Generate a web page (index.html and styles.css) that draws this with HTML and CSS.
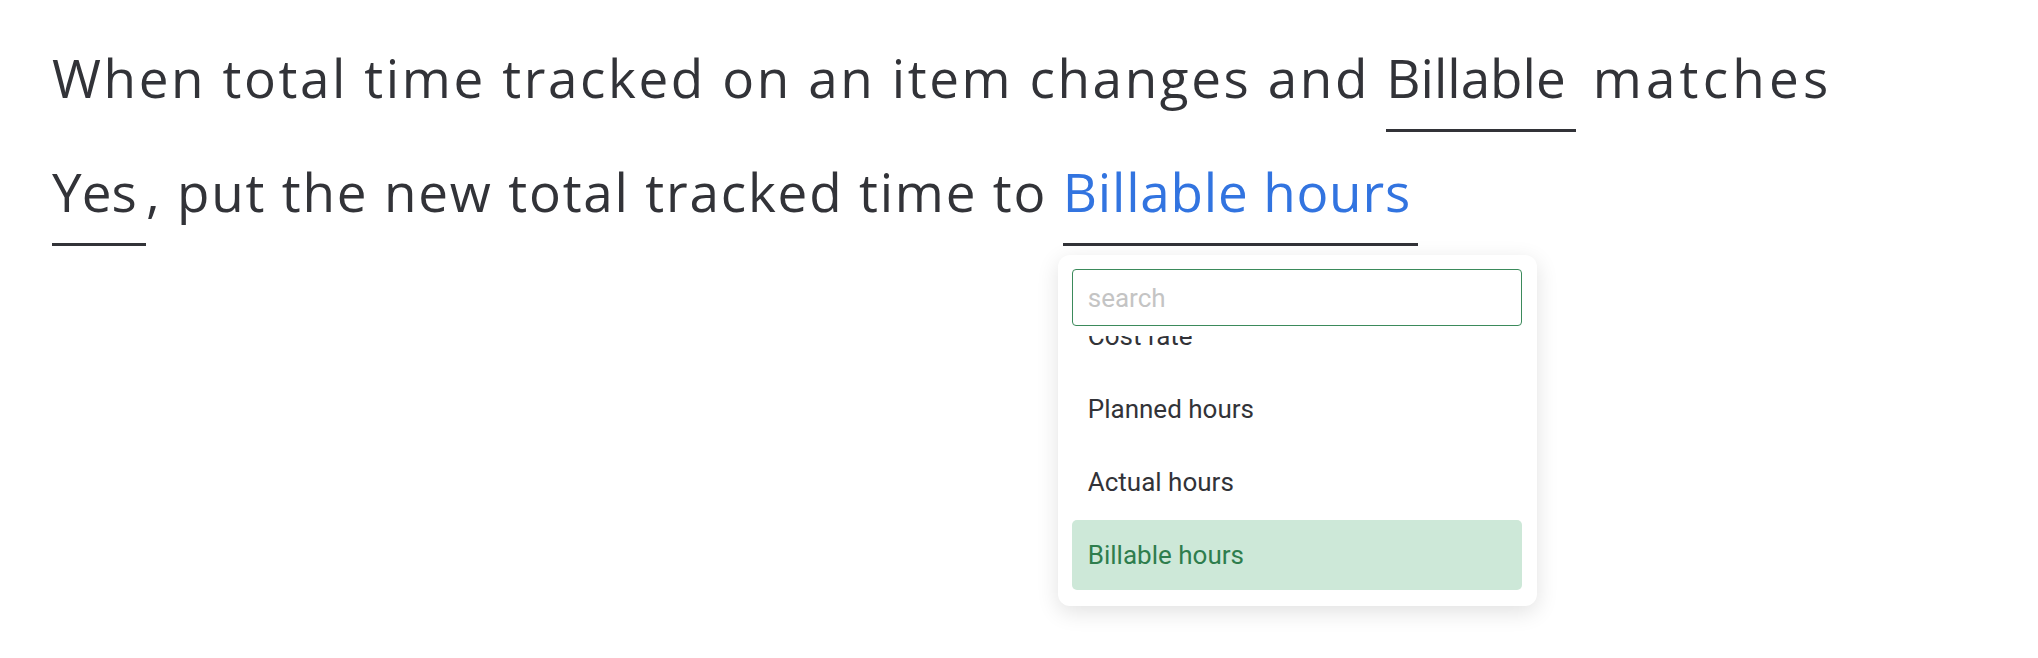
FILE: index.html
```html
<!DOCTYPE html>
<html lang="en">
<head>
<meta charset="utf-8">
<title>Automation recipe</title>
<link rel="stylesheet" href="styles.css">
</head>
<body>
<div class="recipe">
  <div class="line line-trigger">When total time tracked on an item changes and <span class="token token-billable">Billable</span> <span class="tail">matches</span></div>
  <div class="line line-action"><span class="token token-yes">Yes</span>, put the new total tracked time to <span class="token token-column"><span class="token-value">Billable hours</span>
      <div class="dropdown">
        <div class="dropdown-head">
          <input class="search" type="text" placeholder="search">
        </div>
        <div class="options">
          <div class="option">Hourly rate</div>
          <div class="option">Cost rate</div>
          <div class="option">Planned hours</div>
          <div class="option">Actual hours</div>
          <div class="option option-selected">Billable hours</div>
        </div>
      </div>
    </span></div>
</div>
</body>
</html>
```
FILE: styles.css
```css
html, body {
  margin: 0;
  padding: 0;
  background: #ffffff;
}

.recipe {
  min-height: 658px;
  box-sizing: border-box;
  padding: 41px 0 0 52px;
  font-family: "Open Sans", "Liberation Sans", sans-serif;
  font-size: 53px;
  font-weight: 400;
  color: #323338;
  white-space: nowrap;
}

.line {
  height: 113.5px;
  line-height: 74px;
}

.line-trigger { letter-spacing: 2.6px; }
.line-action { letter-spacing: 1.8px; }
.tail { letter-spacing: 4.2px; }

.token {
  display: inline-block;
  position: relative;
  padding-bottom: 14px;
  border-bottom: 3.5px solid #323338;
  vertical-align: baseline;
  letter-spacing: 0;
}

.token-billable { width: 190px; }
.token-yes { width: 94px; }
.token-column { width: 355px; }

.token-value {
  color: #3274e0;
  letter-spacing: 0.8px;
}

.dropdown {
  position: absolute;
  left: -5px;
  top: calc(100% + 12.5px);
  width: 479px;
  box-sizing: border-box;
  padding: 14px 15px 16px 14px;
  background: #ffffff;
  border-radius: 12px;
  box-shadow: 0 6px 22px rgba(0, 0, 0, 0.12);
  font-family: Roboto, "Liberation Sans", sans-serif;
  font-size: 26px;
  line-height: normal;
  letter-spacing: 0;
  z-index: 5;
}

.dropdown-head {
  padding-bottom: 10px;
  background: #ffffff;
}

.search {
  display: block;
  width: 100%;
  height: 57px;
  box-sizing: border-box;
  margin: 0;
  padding: 0 15px;
  border: 1px solid #3b8a5b;
  border-radius: 4px;
  font-family: Roboto, "Liberation Sans", sans-serif;
  font-size: 26px;
  color: #323338;
  outline: none;
  background: #ffffff;
}

.search::placeholder {
  color: #c4c4c4;
}

.options {
  height: 254px;
  overflow: hidden;
  display: flex;
  flex-direction: column;
  justify-content: flex-end;
  gap: 3px;
}

.option {
  flex: 0 0 70px;
  height: 70px;
  line-height: 70px;
  padding-left: 16px;
  border-radius: 5px;
  color: #323338;
}

.option-selected {
  background: #cde8d8;
  color: #2e7d4d;
}
```
